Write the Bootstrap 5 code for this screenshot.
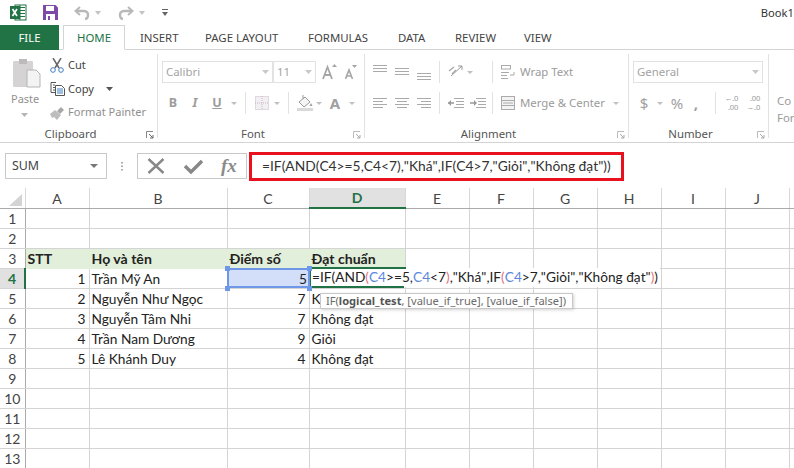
<!DOCTYPE html>
<html lang="vi"><head><meta charset="utf-8"><title>Book1</title>
<link href="https://cdn.jsdelivr.net/npm/bootstrap@5.3.0/dist/css/bootstrap.min.css" rel="stylesheet">
<style>
html,body{margin:0;height:100%;overflow:hidden;background:#fff}
body{width:794px;height:468px;font-family:"Noto Sans","Liberation Sans",sans-serif;font-size:12px;color:#444;position:relative}
svg{display:block;flex:none}
.titlebar{height:25px;padding-left:10px}
.titlename{margin-left:auto;white-space:nowrap;font-size:11.2px;color:#333;margin-top:2px}
.tabbar{height:25px;border-bottom:1px solid #d4d4d4}
.tabitem{height:25px;line-height:25px;font-size:11.4px;color:#444;white-space:nowrap}
.tabfile{width:59px;background:#217346;color:#fff;text-align:center;margin-right:4px;height:25px}
.tabhome{width:62px;border:1px solid #d4d4d4;border-bottom:1px solid #fff;color:#217346;text-align:center;line-height:24px;height:25px;margin-right:15px}
.t1{width:65px}.t2{width:103px}.t3{width:90px}.t4{width:57px}.t5{width:69px}
.ribbon{height:93px;border-bottom:1px solid #d4d4d4;overflow:hidden}
.grp{height:84px;margin-top:4px;border-right:1px solid #e2e2e2;position:relative;flex:none}
.g1{width:158px}.g2{width:207px}.g3{width:264px}.g4{width:140px}.g5{flex:1;border:0}
.glabel{position:absolute;left:0;right:16px;top:73px;text-align:center;font-size:11.4px;line-height:14px;color:#555}
.launch{position:absolute;right:3px;top:77px}
.clip-big{width:49px;padding-left:12px;padding-top:4px}
.paste{font-size:11px;color:#929292;margin-top:4px;line-height:14px;margin-left:-1px}
.caret-p{margin:7px 0 0 9px}
.cliprow{height:23.5px;font-size:11.1px;gap:3px;white-space:nowrap;color:#444}
.cliprow .ci{width:16px;display:flex;justify-content:center}
.cliprow.off{color:#8f8f8f}
.cap1{margin-left:9px}
.rw{height:22px}
.rw1{margin-top:7px;padding-left:4px}
.rw2{margin-top:9px;padding-left:4px}
.combo{height:22px;border:1px solid #e2e2e2;color:#a3a3a3;font-size:11.4px;padding:0 3px;justify-content:space-between}
.cfont{width:111px}.csize{width:43px}.cnum{width:130px}
.cell22{width:22px;display:flex;justify-content:center;align-items:center;height:22px;font-weight:700;color:#9c9c9c;font-size:12.5px}
.cellc{display:flex;justify-content:center;align-items:center;height:22px;flex:none}
.w12{width:12px}.w8{width:8px}.w10{width:10px}.w15{width:15px}.w16{width:16px}.w20{width:20px}.w22{width:22px}.w24{width:24px}.w14{width:14px}.w5{width:5px}.w6{width:6px}.w4{width:4px}
.up4{margin-bottom:8px}.up1{margin-bottom:2px}.dn4{margin-top:8px}
.vsep{width:1px;height:22px;background:#e2e2e2;flex:none}
.altext{font-size:11.4px;color:#9a9a9a;white-space:nowrap;margin-left:5px;line-height:22px}
.numch{font-size:15px;color:#a0a0a0}
.dec{width:14px;font-size:7.5px;line-height:9px;color:#999;text-align:right;white-space:nowrap;flex:none;letter-spacing:-.2px}
.cfcut{font-size:11.4px;color:#9a9a9a;line-height:17px;padding:38px 0 0 8px;white-space:nowrap}
.fbar{height:45px;padding-top:10px;padding-left:5px}
.namebox{width:102px;height:26px;border:1px solid #c9c9c9;font-size:12.4px;padding:0 8px 0 6px;color:#444;justify-content:space-between}
.dots{width:30px;justify-content:center;height:26px}
.fxbox{width:110px;height:26px;border:1px solid #c9c9c9;justify-content:space-around}
.fxt{font-family:"Liberation Serif",serif;font-style:italic;font-weight:700;font-size:19px;color:#8b8b8b;line-height:22px}
.redbox{width:375px;height:29px;margin:-1px 0 0 2px;border:3px solid #e8121f;padding-left:10px;font-family:Lato,"Noto Sans",sans-serif;font-size:13.8px;color:#333;white-space:nowrap;line-height:22px;font-kerning:none}
.sheetwrap{position:relative;height:280px;overflow:hidden}
.sheet{table-layout:fixed;width:794px;border-collapse:collapse;margin:0;font-family:Lato,"Noto Sans",sans-serif;font-size:13.7px;color:#222}
.sheet>:not(caption)>*>*{padding:0 2px;height:20px;line-height:18px;border:0;border-right:1px solid #d4d4d4;border-bottom:1px solid #d4d4d4;box-shadow:none;background:transparent;white-space:nowrap;overflow:hidden;vertical-align:bottom;color:#222}
.sheet .hc,.sheet .hr{color:#444;text-align:center;font-weight:400;background:#fff;font-size:14px;padding:0;line-height:19px}
.sheet .hr{border-right-color:#ababab}
.sheet .hc{border-bottom-color:#ababab;border-right-color:#d8d8d8}
.sheet .hcon{background:#e1e1e1;color:#217346;font-weight:700;border-bottom:2px solid #217346}
.sheet .hron{background:#e1e1e1;color:#217346;font-weight:700;border-right:2px solid #217346}
.sheet .lab{background:#e2efda;font-weight:700;font-size:14.1px;border-right-color:#e2efda;border-bottom-color:#e2efda}
.sheet .lab:nth-child(5){border-right-color:#d4d4d4}
.sheet .num{text-align:right;padding-right:3px}
.cr{width:25px}.ca{width:64px}.cb{width:138px}.cc{width:82px}.cd{width:96px}.ce{width:64px}.ck{width:5px}
.corner{position:absolute;left:9px;top:6px}
.seledge{position:absolute;left:227px;top:80px;width:83px;height:20px;background:#d3def8;border:2px solid #6f97e8;font-family:Lato,"Noto Sans",sans-serif;font-size:13.7px;line-height:17px;text-align:right;padding-right:1px;color:#222}
.hdl{position:absolute;width:5px;height:5px;background:#6f97e8}
.h1{left:225px;top:78px}.h2{left:307px;top:78px}.h3{left:225px;top:98px}.h4{left:307px;top:98px}
.editcell{position:absolute;left:310px;top:80px;height:19px;padding-left:1px;border-left:1px solid #217346;font-family:Lato,"Noto Sans",sans-serif;font-size:13.7px;color:#222;line-height:18px;background:#fff;white-space:nowrap;width:350px;font-kerning:none}
.editline{position:absolute;left:310px;height:2px;background:#217346}
.e1{top:79px;width:96px}.e2{top:98px;width:94px}
.rb{color:#e8707a}.bl{color:#5b87dd}
.tip{position:absolute;left:320px;top:105px;width:253px;height:16px;background:#fff;border:1px solid #c8c8c8;box-shadow:1px 1px 3px rgba(0,0,0,.18);font-size:11.1px;line-height:14px;padding-left:5px;color:#6b6b6b;white-space:nowrap}
.tip b{color:#555}
</style></head><body>

<div class="titlebar d-flex align-items-center">
  <svg width="17" height="17" viewBox="0 0 17 17" class="me-3"><rect x="5" y="1" width="11" height="15" fill="#fff" stroke="#217346"/><path d="M10 3.5h5M10 6.5h5M10 9.5h5M10 12.500h5M10 1v15" stroke="#217346"/><rect y="2" width="10" height="13" fill="#217346"/><path d="M2.500 5l4.500 7M7 5l-4.500 7" stroke="#fff" stroke-width="1.700"/></svg>
  <svg width="15" height="15" viewBox="0 0 15 15" class="me-3"><path d="M0 0h12.500L15 2.500V15H0z" fill="#7d4aa8"/><rect x="3" y="1" width="8" height="5" fill="#fff"/><rect x="3" y="9" width="9" height="6" fill="#fff"/><rect x="5" y="11" width="2" height="4" fill="#7d4aa8"/></svg>
  <svg width="16" height="14" viewBox="0 0 16 14"><path d="M2 5h8c3 0 4 2 4 4s-1 4-3 4" fill="none" stroke="#b8b8b8" stroke-width="2.400"/><path d="M6 1L1.500 5 6 9" fill="none" stroke="#b8b8b8" stroke-width="2"/></svg>
  <svg width="8" height="4" viewBox="0 0 8 4" class="ms-1"><path d="M1 0h6L4 4z" fill="#c4c4c4"/></svg>
  <svg width="16" height="14" viewBox="0 0 16 14" class="ms-3"><path d="M14 5H6C3 5 2 7 2 9s1 4 3 4" fill="none" stroke="#b8b8b8" stroke-width="2.400"/><path d="M10 1l4.500 4L10 9" fill="none" stroke="#b8b8b8" stroke-width="2"/></svg>
  <svg width="8" height="4" viewBox="0 0 8 4" class="ms-1"><path d="M1 0h6L4 4z" fill="#c4c4c4"/></svg>
  <svg width="6" height="7" viewBox="0 0 6 7" class="ms-3"><path d="M0 0h6v1H0zM0 3h6L3 7z" fill="#666"/></svg>
  <div class="titlename">Book1</div>
</div>

<div class="tabbar d-flex">
  <div class="tabitem tabfile">FILE</div>
  <div class="tabitem tabhome">HOME</div>
  <div class="tabitem t1">INSERT</div>
  <div class="tabitem t2">PAGE LAYOUT</div>
  <div class="tabitem t3">FORMULAS</div>
  <div class="tabitem t4">DATA</div>
  <div class="tabitem t5">REVIEW</div>
  <div class="tabitem">VIEW</div>
</div>

<div class="ribbon d-flex">
  <section class="grp g1 d-flex">
    <div class="clip-big">
      <svg width="29" height="30" viewBox="0 0 29 30"><rect x="1" y="3" width="20" height="26" rx="1" fill="#d6d3d5"/><rect x="7" y="1" width="8" height="5" fill="#bdbabc"/><path d="M15 12h9l4 4v13H15z" fill="#f4f3f4" stroke="#b5b5b5"/></svg>
      <div class="paste">Paste</div>
      <svg class="caret-p" width="7" height="4" viewBox="0 0 7 4"><path d="M0 0h7L3.500 4z" fill="#b5b5b5"/></svg>
    </div>
    <div>
      <div class="cliprow d-flex align-items-center"><span class="ci"><svg width="14" height="15" viewBox="0 0 14 15"><path d="M3 0l6 10M11 0L5 10" stroke="#666" stroke-width="1.500"/><circle cx="3" cy="12" r="2.300" fill="none" stroke="#3f7fc0"/><circle cx="11" cy="12" r="2.300" fill="none" stroke="#3f7fc0"/></svg></span>Cut</div>
      <div class="cliprow d-flex align-items-center"><span class="ci"><svg width="15" height="14" viewBox="0 0 15 14"><path d="M6 .5H1v10h4" fill="none" stroke="#555"/><path d="M5.500 3.500h6l3 3v7h-9z" fill="#fff" stroke="#555"/><path d="M3 3h2M3 5.500h2M3 8h2" stroke="#555"/><path d="M7 7h6M7 9h6M7 11h6" stroke="#3f7fc0"/></svg></span>Copy<svg class="cap1" width="7" height="4" viewBox="0 0 7 4"><path d="M0 0h7L3.500 4z" fill="#555"/></svg></div>
      <div class="cliprow off d-flex align-items-center"><span class="ci"><svg width="16" height="14" viewBox="0 0 16 14"><path d="M1 8l5-4 6 5-4 5-3-3-2 1z" fill="#bdbdbd"/><path d="M8 5l4-4 3 3-4 4z" fill="#a8a8a8"/></svg></span>Format Painter</div>
    </div>
    <div class="glabel">Clipboard</div>
    <svg class="launch" width="8" height="8" viewBox="0 0 8 8"><path d="M.5 7V.5H7" fill="none" stroke="#888"/><path d="M3 3l4 4M7 4v3H4" fill="none" stroke="#666"/></svg>
  </section>

  <section class="grp g2">
    <div class="rw rw1 d-flex align-items-center">
      <div class="combo cfont d-flex align-items-center"><span>Calibri</span><svg width="7" height="4" viewBox="0 0 7 4"><path d="M0 0h7L3.500 4z" fill="#c8c8c8"/></svg></div>
      <div class="combo csize d-flex align-items-center"><span>11</span><svg width="7" height="4" viewBox="0 0 7 4"><path d="M0 0h7L3.500 4z" fill="#c8c8c8"/></svg></div>
      <div class="cellc w6"></div>
      <svg width="15" height="16" viewBox="0 0 15 16"><path d="M1 15L5.500 3 10 15M3 11h5" fill="none" stroke="#a6a6a6" stroke-width="1.800"/><path d="M10 3l2.500-3L15 3z" fill="#a6a6a6"/></svg>
      <div class="cellc w8"></div>
      <svg width="12" height="14" viewBox="0 0 12 14"><path d="M.5 14L4 5l3.500 9M2 11h4" fill="none" stroke="#a6a6a6" stroke-width="1.600"/><path d="M7 0h5L9.500 3z" fill="#a6a6a6"/></svg>
    </div>
    <div class="rw rw2 d-flex align-items-center">
      <div class="cell22">B</div><div class="cell22 fst-italic">I</div><div class="cell22 text-decoration-underline">U</div>
      <div class="cellc w12"><svg width="6" height="3" viewBox="0 0 6 3"><path d="M0 0h6L3 3z" fill="#c0c0c0"/></svg></div>
      <div class="cellc w5"></div><div class="vsep"></div><div class="cellc w8"></div>
      <div class="cellc w16"><svg width="14" height="14" viewBox="0 0 14 14"><rect x=".5" y=".5" width="13" height="13" fill="#f3f0f3" stroke="#c8b8c8" stroke-dasharray="1 1"/><path d="M7 0v14M0 7h14" stroke="#c8b8c8" stroke-dasharray="1 1"/></svg></div>
      <div class="cellc w14"><svg width="6" height="3" viewBox="0 0 6 3"><path d="M0 0h6L3 3z" fill="#c0c0c0"/></svg></div>
      <div class="cellc w4"></div><div class="vsep"></div><div class="cellc w8"></div>
      <div class="cellc w16"><svg width="16" height="16" viewBox="0 0 16 16"><path d="M2 7l6-5 5 5-6 5z" fill="#f5f5f5" stroke="#9a9a9a"/><path d="M6 0v4" stroke="#9a9a9a"/><path d="M14 8l1.500 3h-3z" fill="#a0a0a0"/><rect y="13" width="16" height="3" fill="#d9d9d9"/></svg></div>
      <div class="cellc w12"><svg width="6" height="3" viewBox="0 0 6 3"><path d="M0 0h6L3 3z" fill="#c0c0c0"/></svg></div>
      <div class="cellc w20 numch fw-bold">A</div>
      <div class="cellc w14"><svg width="6" height="3" viewBox="0 0 6 3"><path d="M0 0h6L3 3z" fill="#c0c0c0"/></svg></div>
    </div>
    <div class="glabel">Font</div>
    <svg class="launch" width="8" height="8" viewBox="0 0 8 8"><path d="M.5 7V.5H7" fill="none" stroke="#bbb"/><path d="M3 3l4 4M7 4v3H4" fill="none" stroke="#aaa"/></svg>
  </section>

  <section class="grp g3">
    <div class="rw rw1 d-flex align-items-center">
      <div class="cellc w4"></div>
      <svg width="14" height="7" viewBox="0 0 14 7" class="up4"><path d="M0 .5h14M0 3.500h14M0 6.500h14" stroke="#aaa"/></svg>
      <div class="cellc w8"></div>
      <svg width="14" height="7" viewBox="0 0 14 7" class="up1"><path d="M0 .5h14M0 3.500h14M0 6.500h14" stroke="#aaa"/></svg>
      <div class="cellc w8"></div>
      <svg width="14" height="7" viewBox="0 0 14 7" class="dn4"><path d="M0 .5h14M0 3.500h14M0 6.500h14" stroke="#aaa"/></svg>
      <div class="cellc w8"></div><div class="vsep"></div><div class="cellc w8"></div>
      <svg width="15" height="15" viewBox="0 0 15 15"><path d="M3 11L14 1" stroke="#999"/><path d="M10 1h4v4" fill="none" stroke="#999"/><path d="M1 6l5-4M4 9l4-4" stroke="#aaa" stroke-width="1.500"/></svg>
      <div class="cellc w14"><svg width="6" height="3" viewBox="0 0 6 3"><path d="M0 0h6L3 3z" fill="#c0c0c0"/></svg></div>
      <div class="cellc w15"></div><div class="vsep"></div><div class="cellc w8"></div>
      <svg width="14" height="14" viewBox="0 0 14 14"><rect x=".5" y=".5" width="9" height="3.500" fill="none" stroke="#aaa"/><path d="M0 7.500h8M0 10.500h6M0 13.500h7M13 7v3H9" fill="none" stroke="#aaa"/></svg>
      <div class="altext">Wrap Text</div>
    </div>
    <div class="rw rw2 d-flex align-items-center">
      <div class="cellc w4"></div>
      <svg width="14" height="10" viewBox="0 0 14 10"><path d="M0 .5h14M0 3.500h10M0 6.500h14M0 9.500h10" stroke="#aaa"/></svg>
      <div class="cellc w8"></div>
      <svg width="14" height="10" viewBox="0 0 14 10"><path d="M0 .5h14M2 3.500h10M0 6.500h14M2 9.500h10" stroke="#aaa"/></svg>
      <div class="cellc w8"></div>
      <svg width="14" height="10" viewBox="0 0 14 10"><path d="M0 .5h14M4 3.500h10M0 6.500h14M4 9.500h10" stroke="#aaa"/></svg>
      <div class="cellc w8"></div><div class="vsep"></div><div class="cellc w8"></div>
      <svg width="16" height="10" viewBox="0 0 16 10"><path d="M6 .5h10M8 3.500h8M8 6.500h8M6 9.500h10" stroke="#aaa"/><path d="M0 5h6" stroke="#999" stroke-width="1.500"/><path d="M3 2L0 5l3 3z" fill="#999"/></svg>
      <div class="cellc w6"></div>
      <svg width="16" height="10" viewBox="0 0 16 10"><path d="M6 .5h10M8 3.500h8M8 6.500h8M6 9.500h10" stroke="#aaa"/><path d="M0 5h5" stroke="#999" stroke-width="1.500"/><path d="M4 2l3 3-3 3z" fill="#999"/></svg>
      <div class="cellc w6"></div><div class="vsep"></div><div class="cellc w8"></div>
      <svg width="14" height="14" viewBox="0 0 14 14"><rect x=".5" y=".5" width="13" height="13" fill="#f3f3f3" stroke="#aaa"/><path d="M0 4.500h14M0 9.500h14M2 7h10" stroke="#aaa"/></svg>
      <div class="altext">Merge &amp; Center</div>
      <div class="cellc w22"><svg width="6" height="3" viewBox="0 0 6 3"><path d="M0 0h6L3 3z" fill="#c0c0c0"/></svg></div>
    </div>
    <div class="glabel">Alignment</div>
    <svg class="launch" width="8" height="8" viewBox="0 0 8 8"><path d="M.5 7V.5H7" fill="none" stroke="#bbb"/><path d="M3 3l4 4M7 4v3H4" fill="none" stroke="#aaa"/></svg>
  </section>

  <section class="grp g4">
    <div class="rw rw1 d-flex align-items-center">
      <div class="combo cnum d-flex align-items-center"><span>General</span><svg width="7" height="4" viewBox="0 0 7 4"><path d="M0 0h7L3.500 4z" fill="#c8c8c8"/></svg></div>
    </div>
    <div class="rw rw2 d-flex align-items-center">
      <div class="cellc w22 numch">$</div>
      <div class="cellc w10"><svg width="6" height="3" viewBox="0 0 6 3"><path d="M0 0h6L3 3z" fill="#c0c0c0"/></svg></div>
      <div class="cellc w24 numch">%</div>
      <div class="cellc w14 numch fw-bold">,</div>
      <div class="cellc w12"></div><div class="vsep"></div><div class="cellc w8"></div>
      <div class="dec">←.0<br>.00</div>
      <div class="cellc w8"></div>
      <div class="dec">.00<br>→.0</div>
    </div>
    <div class="glabel">Number</div>
    <svg class="launch" width="8" height="8" viewBox="0 0 8 8"><path d="M.5 7V.5H7" fill="none" stroke="#bbb"/><path d="M3 3l4 4M7 4v3H4" fill="none" stroke="#aaa"/></svg>
  </section>

  <section class="grp g5"><div class="cfcut">Co<br>For</div></section>
</div>

<div class="fbar d-flex">
  <div class="namebox d-flex align-items-center"><span>SUM</span><svg width="8" height="4" viewBox="0 0 8 4"><path d="M0 0h8L4 4z" fill="#777"/></svg></div>
  <div class="dots d-flex align-items-center"><svg width="2" height="9" viewBox="0 0 2 9"><path d="M0 0h2v1.500H0zM0 3.500h2V5H0zM0 7h2v1.500H0z" fill="#aaa"/></svg></div>
  <div class="fxbox d-flex align-items-center">
    <svg width="18" height="16" viewBox="0 0 18 16"><path d="M1.500 1l15 14M16.500 1l-15 14" stroke="#888" stroke-width="2.400"/></svg>
    <svg width="19" height="15" viewBox="0 0 19 15"><path d="M1 7l6 6L18 2" fill="none" stroke="#888" stroke-width="3.400"/></svg>
    <span class="fxt">fx</span>
  </div>
  <div class="redbox">=IF(AND(C4&gt;=5,C4&lt;7),"Khá",IF(C4&gt;7,"Giỏi","Không đạt"))</div>
</div>

<div class="sheetwrap">
<table class="table sheet">
<colgroup><col class="cr"><col class="ca"><col class="cb"><col class="cc"><col class="cd"><col class="ce"><col class="ce"><col class="ce"><col class="ce"><col class="ce"><col class="ce"><col class="ck"></colgroup>
<thead><tr><th class="hc"></th><th class="hc">A</th><th class="hc">B</th><th class="hc">C</th><th class="hc hcon">D</th><th class="hc">E</th><th class="hc">F</th><th class="hc">G</th><th class="hc">H</th><th class="hc">I</th><th class="hc">J</th><th class="hc"></th></tr></thead>
<tbody>
<tr><th class="hr">1</th><td></td><td></td><td></td><td></td><td></td><td></td><td></td><td></td><td></td><td></td><td></td></tr>
<tr><th class="hr">2</th><td></td><td></td><td></td><td></td><td></td><td></td><td></td><td></td><td></td><td></td><td></td></tr>
<tr><th class="hr">3</th><td class="lab">STT</td><td class="lab">Họ và tên</td><td class="lab">Điểm số</td><td class="lab">Đạt chuẩn</td><td></td><td></td><td></td><td></td><td></td><td></td><td></td></tr>
<tr><th class="hr hron">4</th><td class="num">1</td><td>Trần Mỹ An</td><td></td><td></td><td></td><td></td><td></td><td></td><td></td><td></td><td></td></tr>
<tr><th class="hr">5</th><td class="num">2</td><td>Nguyễn Như Ngọc</td><td class="num">7</td><td>Không đạt</td><td></td><td></td><td></td><td></td><td></td><td></td><td></td></tr>
<tr><th class="hr">6</th><td class="num">3</td><td>Nguyễn Tâm Nhi</td><td class="num">7</td><td>Không đạt</td><td></td><td></td><td></td><td></td><td></td><td></td><td></td></tr>
<tr><th class="hr">7</th><td class="num">4</td><td>Trần Nam Dương</td><td class="num">9</td><td>Giỏi</td><td></td><td></td><td></td><td></td><td></td><td></td><td></td></tr>
<tr><th class="hr">8</th><td class="num">5</td><td>Lê Khánh Duy</td><td class="num">4</td><td>Không đạt</td><td></td><td></td><td></td><td></td><td></td><td></td><td></td></tr>
<tr><th class="hr">9</th><td></td><td></td><td></td><td></td><td></td><td></td><td></td><td></td><td></td><td></td><td></td></tr>
<tr><th class="hr">10</th><td></td><td></td><td></td><td></td><td></td><td></td><td></td><td></td><td></td><td></td><td></td></tr>
<tr><th class="hr">11</th><td></td><td></td><td></td><td></td><td></td><td></td><td></td><td></td><td></td><td></td><td></td></tr>
<tr><th class="hr">12</th><td></td><td></td><td></td><td></td><td></td><td></td><td></td><td></td><td></td><td></td><td></td></tr>
<tr><th class="hr">13</th><td></td><td></td><td></td><td></td><td></td><td></td><td></td><td></td><td></td><td></td><td></td></tr>
</tbody></table>
<svg class="corner" width="13" height="12" viewBox="0 0 13 12"><path d="M13 0v12H0z" fill="#d4d4d4"/></svg>
<div class="seledge">5</div>
<div class="editcell">=IF(AND<span class="rb">(</span><span class="bl">C4</span>&gt;=5,<span class="bl">C4</span>&lt;7<span class="rb">)</span>,"Khá",IF<span class="rb">(</span><span class="bl">C4</span>&gt;7,"Giỏi","Không đạt"<span class="rb">)</span>)</div>
<div class="editline e1"></div><div class="editline e2"></div>
<div class="hdl h1"></div><div class="hdl h2"></div><div class="hdl h3"></div><div class="hdl h4"></div>
<div class="tip">IF(<b>logical_test</b>, [value_if_true], [value_if_false])</div>
</div>
</body></html>
